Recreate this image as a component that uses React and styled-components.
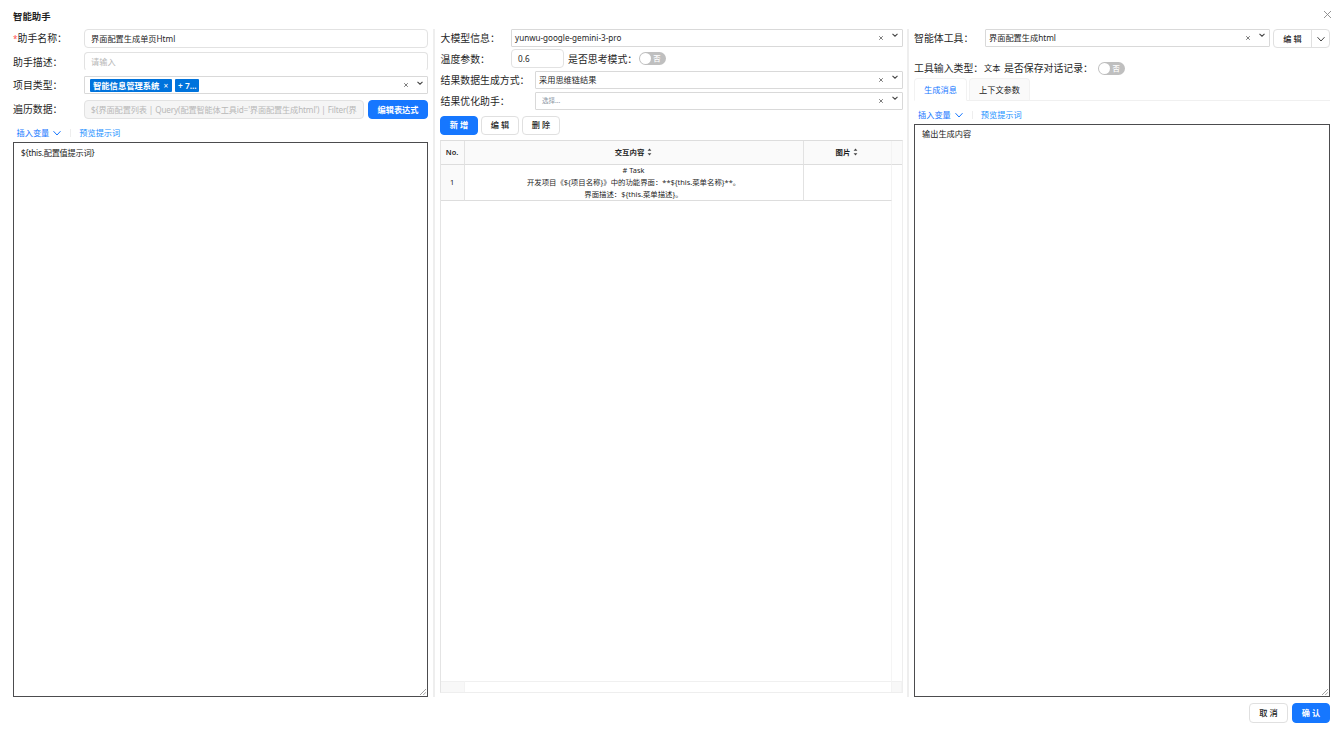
import React from "react";
import styled, { createGlobalStyle } from "styled-components";

const GlobalStyle = createGlobalStyle`
  * {
    box-sizing: border-box;
  }

  body {
    margin: 0;
    background: #fff;
    color: #1f1f1f;
    font-family: "Noto Sans", "Noto Sans CJK SC", sans-serif;
    font-size: 8.2px;
    overflow: hidden;
  }
`;

const StyledModal = styled.div`
  width: 1342px;
  height: 731px;
  padding: 9px 12px 8px 13px;
  display: flex;
  flex-direction: column;
`;

const StyledHeader = styled.div`
  height: 20px;
  flex: none;
  display: flex;
  justify-content: space-between;
  align-items: flex-start;
`;

const StyledTitle = styled.div`
  font-size: 9.4px;
  line-height: 15px;
  font-weight: 600;
`;

const StyledCloseIcon = styled.svg`
  width: 9px;
  height: 9px;
  margin: 1px -2px 0 0;
  fill: none;
  stroke: #888;
  stroke-width: 0.9;
`;

const StyledBody = styled.div`
  height: 668px;
  flex: none;
  display: flex;
`;

const StyledColumn = styled.div`
  width: ${(props) => props.$width}px;
  flex: none;
  display: flex;
  flex-direction: column;
`;

const StyledDivider = styled.div`
  width: 2px;
  flex: none;
  margin: 0 5px 0 ${(props) => props.$left || 5}px;
  background: #eee;
`;

const StyledRow = styled.div`
  height: ${(props) => props.$height || 19}px;
  margin-bottom: ${(props) => props.$gap || 0}px;
  flex: none;
  display: flex;
  align-items: ${(props) => (props.$top ? "flex-start" : "center")};
`;

const StyledLabel = styled.label`
  width: ${(props) => (props.$width ? `${props.$width}px` : "auto")};
  margin-left: ${(props) => props.$left || 0}px;
  padding-left: ${(props) => props.$inset || 0}px;
  padding-bottom: ${(props) => (props.$raise ? 1 : 0)}px;
  flex: none;
  font-size: ${(props) => props.$size || 9.9}px;
  line-height: ${(props) => (props.$raise ? 17 : 18)}px;
  white-space: nowrap;
`;

const StyledRequired = styled.span`
  color: #ff4d4f;
  font-size: 8.2px;
`;

const StyledInput = styled.div`
  width: ${(props) => (props.$width ? `${props.$width}px` : "auto")};
  flex: ${(props) => (props.$width ? "none" : "1")};
  height: 19px;
  padding: 0 6px;
  border: 1px solid #e2e2e2;
  border-bottom-color: ${(props) => (props.$open ? "transparent" : "#e2e2e2")};
  border-radius: 4px;
  background: ${(props) => (props.$disabled ? "#f5f5f5" : "#fff")};
  color: ${(props) => (props.$disabled || props.$empty ? "#b8b8b8" : "#262626")};
  letter-spacing: ${(props) => (props.$disabled ? "-0.14px" : "normal")};
  line-height: ${(props) => (props.$low ? 18 : 17)}px;
  white-space: nowrap;
  overflow: hidden;
`;

const StyledSelect = styled.div`
  width: ${(props) => (props.$width ? `${props.$width}px` : "auto")};
  flex: ${(props) => (props.$width ? "none" : "1")};
  height: ${(props) => props.$height || 18}px;
  padding: 0 4px 0 ${(props) => props.$indent || 3}px;
  border: 1px solid #d9d9d9;
  border-radius: 1px;
  display: flex;
  align-items: center;
  color: #262626;
`;

const StyledValue = styled.div`
  flex: 1;
  display: flex;
  font-size: ${(props) => props.$size || 8.2}px;
  color: ${(props) => (props.$empty ? "#8d97a5" : "#262626")};
  line-height: 14px;
`;

const StyledSelectIcon = styled.svg`
  width: ${(props) => props.$size}px;
  height: ${(props) => props.$size}px;
  margin-left: ${(props) => props.$left || 0}px;
  margin-bottom: ${(props) => props.$lift || 0}px;
  flex: none;
  fill: none;
  stroke: ${(props) => props.$color || "#444"};
  stroke-width: ${(props) => props.$stroke || 1}px;
`;

const StyledTag = styled.span`
  width: ${(props) => props.$width}px;
  height: 13px;
  margin-right: 3px;
  padding: 0 ${(props) => props.$pad}px;
  flex: none;
  border-radius: 1px;
  background: #0073dc;
  color: #fff;
  font-size: 8.3px;
  font-weight: ${(props) => (props.$bold ? 700 : 600)};
  line-height: 13px;
  white-space: nowrap;
`;

const StyledTagClose = styled.span`
  margin-left: 4px;
  font-weight: 400;
`;

const StyledButton = styled.button`
  width: ${(props) => props.$width}px;
  height: ${(props) => props.$height || 19}px;
  margin-left: ${(props) => props.$left || 0}px;
  padding: 0;
  flex: none;
  border: 1px solid ${(props) => (props.$primary ? "#1677ff" : "#e0e0e0")};
  border-radius: 4px;
  background: ${(props) => (props.$primary ? "#1677ff" : "#fff")};
  color: ${(props) => (props.$primary ? "#fff" : "#222")};
  font-family: inherit;
  font-size: 8.2px;
  font-weight: ${(props) => (props.$primary ? 600 : 500)};
  line-height: 16px;
  white-space: pre;
`;

const StyledSplitButton = styled.div`
  height: 19px;
  margin-left: 3px;
  display: flex;
  border: 1px solid #e0e0e0;
  border-radius: 4px;
  font-weight: 500;
  line-height: 17px;
`;

const StyledSplitMain = styled.div`
  width: 38px;
  border-right: 1px solid #e0e0e0;
  text-align: center;
  white-space: pre;
`;

const StyledSplitArrow = styled.div`
  width: 17px;
  display: flex;
  align-items: center;
  justify-content: center;
`;

const StyledSwitch = styled.div`
  width: 27px;
  height: 13px;
  margin-left: ${(props) => props.$left || 0}px;
  padding: 1px 5px 1px 1px;
  display: flex;
  align-items: center;
  justify-content: space-between;
  border-radius: 7px;
  background: #bfbfbf;
  color: #fff;
  font-size: 7.4px;
  font-weight: 500;
  line-height: 11px;

  &::before {
    content: "";
    width: 11px;
    height: 11px;
    border-radius: 50%;
    background: #fff;
  }
`;

const StyledLinks = styled.div`
  height: ${(props) => props.$height}px;
  padding: ${(props) => props.$top || 0}px 0 0 ${(props) => props.$indent || 4}px;
  flex: none;
  display: flex;
  align-items: center;
  color: #1677ff;
  line-height: 12px;
`;

const StyledLinkDivider = styled.span`
  width: 1px;
  height: 8px;
  margin: 0 8px 0 9px;
  background: #eee;
`;

const StyledPreview = styled.span`
  color: #1890ff;
`;

const StyledPrompt = styled.div`
  position: relative;
  min-height: 0;
  flex: 1;
  display: flex;
`;

const StyledTextarea = styled.textarea`
  width: 100%;
  margin: 0;
  padding: ${(props) => props.$top || 4}px 7px;
  border: 1px solid #4c4c4e;
  border-radius: 0;
  outline: none;
  resize: none;
  color: #222;
  font-family: inherit;
  font-size: 8.2px;
  letter-spacing: ${(props) => props.$spacing || 0}px;
  line-height: 12px;
`;

const StyledGrip = styled.svg`
  position: absolute;
  right: 2px;
  bottom: 2px;
  width: 6px;
  height: 6px;
  fill: none;
  stroke: #8a8a8a;
  stroke-width: 0.8;
`;

const StyledTable = styled.div`
  width: 463px;
  height: 553px;
  flex: none;
  display: grid;
  grid-template-columns: 24px 339px 88px 10px;
  grid-template-rows: 24px 36px 1fr 11px;
  border: 1px solid #eee;
  border-top-color: #ddd;
  border-left-color: #e4e4e4;
  font-size: 7.4px;
`;

const StyledCell = styled.div`
  padding: 0 1px 2px 0;
  display: flex;
  align-items: center;
  justify-content: center;
  border-right: 1px solid ${(props) => (props.$faint ? "#f3f3f3" : "#e2e2e2")};
  border-bottom: 1px solid ${(props) => (props.$bottom ? "#ddd" : "transparent")};
  background: ${(props) => (props.$shade ? "#fafafa" : "#fff")};
  font-weight: ${(props) => (props.$head ? 600 : 400)};
  line-height: 12px;
  text-align: center;
  white-space: pre-line;
`;

const StyledGutter = styled.div`
  background: ${(props) => (props.$shade ? "#fafafa" : "#fff")};
  border-bottom: 1px solid ${(props) => (props.$bottom ? "#ddd" : "transparent")};
`;

const StyledEmpty = styled.div`
  grid-column: 1 / 4;
  border-right: 1px solid #f5f5f5;
`;

const StyledFoot = styled.div`
  grid-column: ${(props) => props.$column};
  border-top: 1px solid #f0f0f0;
  border-right: 1px solid #f3f3f3;
  background: ${(props) => (props.$shade ? "#f8f8f8" : "#fff")};
`;

const StyledSortIcon = styled.svg`
  width: 5px;
  height: 8px;
  margin-left: 3px;
  fill: #444;
`;

const StyledTabs = styled.div`
  height: 23px;
  flex: none;
  display: flex;
  gap: 2px;
  border-bottom: 1px solid #f0f0f0;
`;

const StyledTab = styled.div`
  width: ${(props) => props.$width}px;
  height: 23px;
  border: 1px solid #f2f2f2;
  border-bottom-color: ${(props) => (props.$active ? "#fff" : "#f0f0f0")};
  border-radius: 4px 4px 0 0;
  background: ${(props) => (props.$active ? "#fff" : "#fafafa")};
  color: ${(props) => (props.$active ? "#1677ff" : "#222")};
  line-height: 22px;
  text-align: center;
`;

const StyledFooter = styled.div`
  height: 26px;
  flex: none;
  padding-top: 6px;
  display: flex;
  justify-content: flex-end;
`;

function Chevron({ left = 3, color }) {
  return (
    <StyledSelectIcon $size={8} $left={left} $color={color} viewBox="0 0 8 8">
      <path d="M0.5 2.2 L4 6 L7.5 2.2" />
    </StyledSelectIcon>
  );
}

function SelectIcons({ lift = 7 }) {
  return (
    <>
      <StyledSelectIcon $size={4} $stroke={0.7} viewBox="0 0 4 4">
        <path d="M0.2 0.2 L3.8 3.8 M3.8 0.2 L0.2 3.8" />
      </StyledSelectIcon>
      <StyledSelectIcon $size={6} $left={9} $lift={lift} $stroke={1.1} viewBox="0 0 6 6">
        <path d="M0.5 1.8 L3 4.2 L5.5 1.8" />
      </StyledSelectIcon>
    </>
  );
}

function Select({ value, empty, size, ...rest }) {
  return (
    <StyledSelect {...rest}>
      <StyledValue $empty={empty} $size={size}>
        {value}
      </StyledValue>
      <SelectIcons />
    </StyledSelect>
  );
}

function PromptLinks(props) {
  return (
    <StyledLinks {...props}>
      插入变量
      <Chevron left={4} color="#1677ff" />
      <StyledLinkDivider />
      <StyledPreview>预览提示词</StyledPreview>
    </StyledLinks>
  );
}

function Prompt({ value, ...rest }) {
  return (
    <StyledPrompt>
      <StyledTextarea defaultValue={value} {...rest} />
      <StyledGrip viewBox="0 0 6 6">
        <path d="M0 6 L6 0 M3.2 6 L6 3.2" />
      </StyledGrip>
    </StyledPrompt>
  );
}

function SortIcon() {
  return (
    <StyledSortIcon viewBox="0 0 5 8">
      <path d="M2.5 0.6 L4.4 2.8 H0.6 Z M2.5 7.4 L4.4 5.2 H0.6 Z" />
    </StyledSortIcon>
  );
}

function AssistantColumn() {
  return (
    <StyledColumn $width={415}>
      <StyledRow $gap={4}>
        <StyledLabel $width={71} $raise>
          <StyledRequired>*</StyledRequired>助手名称：
        </StyledLabel>
        <StyledInput>界面配置生成单页Html</StyledInput>
      </StyledRow>
      <StyledRow $gap={5}>
        <StyledLabel $width={71}>助手描述：</StyledLabel>
        <StyledInput $empty $open>
          请输入
        </StyledInput>
      </StyledRow>
      <StyledRow $height={18} $gap={6}>
        <StyledLabel $width={71}>项目类型：</StyledLabel>
        <StyledSelect $indent={5}>
          <StyledValue>
            <StyledTag $bold $width={82} $pad={3}>
              智能信息管理系统<StyledTagClose>×</StyledTagClose>
            </StyledTag>
            <StyledTag $width={24} $pad={3}>
              + 7...
            </StyledTag>
          </StyledValue>
          <SelectIcons lift={4} />
        </StyledSelect>
      </StyledRow>
      <StyledRow $gap={4}>
        <StyledLabel $width={71} $raise>
          遍历数据：
        </StyledLabel>
        <StyledInput $width={280} $disabled>
          {"${界面配置列表 | Query(配置智能体工具id='界面配置生成html') | Filter(界"}
        </StyledInput>
        <StyledButton $primary $width={60} $left={4}>
          编辑表达式
        </StyledButton>
      </StyledRow>
      <PromptLinks $height={19} $indent={3.5} />
      <Prompt value={"${this.配置值提示词}"} $spacing={-0.2} />
    </StyledColumn>
  );
}

function ModelColumn() {
  return (
    <StyledColumn $width={463}>
      <StyledRow $height={18} $gap={2}>
        <StyledLabel $width={71} $inset={0.6}>
          大模型信息：
        </StyledLabel>
        <Select value="yunwu-google-gemini-3-pro" size={8.1} />
      </StyledRow>
      <StyledRow $gap={3}>
        <StyledLabel $width={71} $inset={0.6}>
          温度参数：
        </StyledLabel>
        <StyledInput $width={53} $low>
          0.6
        </StyledInput>
        <StyledLabel $left={4}>是否思考模式：</StyledLabel>
        <StyledSwitch $left={1.5}>否</StyledSwitch>
      </StyledRow>
      <StyledRow $height={18} $gap={3}>
        <StyledLabel $width={95} $inset={0.6}>
          结果数据生成方式：
        </StyledLabel>
        <Select value="采用思维链结果" />
      </StyledRow>
      <StyledRow $height={18} $gap={5}>
        <StyledLabel $width={95} $inset={0.6}>
          结果优化助手：
        </StyledLabel>
        <Select value="选择..." empty size={6.5} $indent={6} />
      </StyledRow>
      <StyledRow $height={20} $gap={5}>
        <StyledButton $primary $width={38}>
          新 增
        </StyledButton>
        <StyledButton $width={38} $left={3}>
          编 辑
        </StyledButton>
        <StyledButton $width={38} $left={3}>
          删 除
        </StyledButton>
      </StyledRow>
      <StyledTable>
        <StyledCell $head $shade $bottom>
          No.
        </StyledCell>
        <StyledCell $head $shade $bottom>
          交互内容
          <SortIcon />
        </StyledCell>
        <StyledCell $head $shade $bottom $faint>
          图片
          <SortIcon />
        </StyledCell>
        <StyledGutter $shade $bottom />
        <StyledCell $shade $bottom>
          1
        </StyledCell>
        <StyledCell $bottom>
          {"# Task\n开发项目《${项目名称}》中的功能界面：**${this.菜单名称}**。\n界面描述：${this.菜单描述}。"}
        </StyledCell>
        <StyledCell $bottom $faint />
        <StyledGutter />
        <StyledEmpty />
        <StyledGutter />
        <StyledFoot $shade $column="1" />
        <StyledFoot $column="2 / 4" />
        <StyledFoot $shade $column="4" />
      </StyledTable>
    </StyledColumn>
  );
}

function ToolColumn() {
  return (
    <StyledColumn $width={416}>
      <StyledRow $gap={10} $top>
        <StyledLabel $width={71}>智能体工具：</StyledLabel>
        <Select value="界面配置生成html" $width={285} />
        <StyledSplitButton>
          <StyledSplitMain>编 辑</StyledSplitMain>
          <StyledSplitArrow>
            <Chevron left={0} />
          </StyledSplitArrow>
        </StyledSplitButton>
      </StyledRow>
      <StyledRow $height={20}>
        <StyledLabel $width={70}>工具输入类型：</StyledLabel>
        <StyledLabel $size={8.2} $width={20}>
          文本
        </StyledLabel>
        <StyledLabel $width={90}>是否保存对话记录：</StyledLabel>
        <StyledSwitch $left={4}>否</StyledSwitch>
      </StyledRow>
      <StyledTabs>
        <StyledTab $active $width={53}>
          生成消息
        </StyledTab>
        <StyledTab $width={61}>上下文参数</StyledTab>
      </StyledTabs>
      <PromptLinks $height={23} $top={4} />
      <Prompt value="输出生成内容" $top={3} />
    </StyledColumn>
  );
}

export default function App() {
  return (
    <>
      <GlobalStyle />
      <StyledModal>
        <StyledHeader>
          <StyledTitle>智能助手</StyledTitle>
          <StyledCloseIcon viewBox="0 0 9 9">
            <path d="M1 1 L8 8 M8 1 L1 8" />
          </StyledCloseIcon>
        </StyledHeader>
        <StyledBody>
          <AssistantColumn />
          <StyledDivider />
          <ModelColumn />
          <StyledDivider $left={4} />
          <ToolColumn />
        </StyledBody>
        <StyledFooter>
          <StyledButton $width={39} $height={20}>
            取 消
          </StyledButton>
          <StyledButton $primary $width={38} $height={20} $left={4}>
            确 认
          </StyledButton>
        </StyledFooter>
      </StyledModal>
    </>
  );
}
